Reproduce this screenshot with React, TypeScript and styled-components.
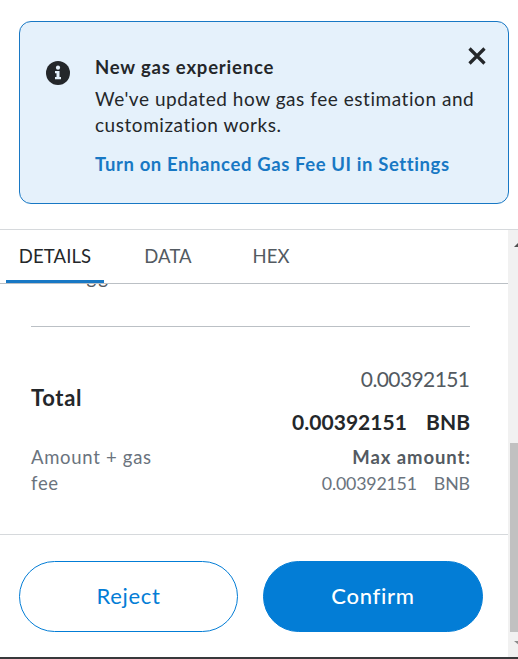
import React from "react";
import styled, { createGlobalStyle } from "styled-components";

const GlobalStyle = createGlobalStyle`
  * { box-sizing: border-box; }
  body { margin: 0; background: #fff; font-family: Lato, "Liberation Sans", sans-serif; font-variant-ligatures: none; }
  button { font: inherit; padding: 0; border: 0; background: none; cursor: pointer; }
`;

const Page = styled.main`
  width: 518px;
  height: 659px;
  display: flex;
  flex-direction: column;
  overflow: hidden;
  background: #fff;
  border-bottom: 2px solid #38393b;
`;

const NoticeArea = styled.div`
  flex: none;
  height: 229px;
  padding: 21px 9px 0 19px;
`;

const Notice = styled.section`
  height: 183px;
  border: 1px solid #1878c4;
  border-radius: 12px;
  background: #e5f1fb;
  display: flex;
  padding: 32px 21px 0 25.5px;
`;

const InfoIcon = styled.svg`
  flex: none;
  width: 24px;
  height: 24px;
  margin: 7px 25.5px 0 0;
`;

const NoticeBody = styled.div`
  flex: 1;
  white-space: nowrap;
`;

const CloseButton = styled.button`
  flex: none;
  width: 20px;
  height: 20px;
  margin-top: -8px;
  margin-left: -20px;
  display: flex;
`;

const Line = styled.p<{ $size?: number; $height?: number; $bold?: boolean; $track?: number; $tone?: string }>`
  margin: 0;
  font-size: ${(p) => p.$size ?? 18}px;
  line-height: ${(p) => p.$height ?? 26}px;
  font-weight: ${(p) => (p.$bold ? 700 : 400)};
  letter-spacing: ${(p) => p.$track ?? 0}px;
  margin-right: ${(p) => -(p.$track ?? 0)}px;
  color: ${(p) => p.$tone ?? "#24272a"};
  white-space: nowrap;
`;

const NoticeText = styled(Line)`
  margin-top: 6px;
`;

const NoticeLink = styled(Line)`
  margin-top: 13px;
`;

const Lower = styled.div`
  flex: 1;
  min-height: 0;
  display: flex;
  border-top: 1px solid #d6d9dc;
`;

const Content = styled.div`
  width: 508px;
  display: flex;
  flex-direction: column;
`;

const Tabs = styled.nav`
  flex: none;
  height: 54px;
  display: flex;
  gap: 27px;
  padding-left: 6px;
  border-bottom: 1px solid #bbc0c5;
`;

const Tab = styled.button<{ $active?: boolean; $width: number }>`
  && { font-size: 18.5px; }
  width: ${(p) => p.$width}px;
  letter-spacing: 0.1px;
  color: ${(p) => (p.$active ? "#24272a" : "#535a61")};
  border-bottom: 3px solid ${(p) => (p.$active ? "#1878c4" : "transparent")};
  padding-top: 1px;
`;

const Details = styled.div`
  height: 250px;
  padding: 0 38px 0 31px;
  overflow: hidden;
`;

const ScrolledLine = styled.div`
  height: 43px;
  overflow: hidden;
  border-bottom: 1px solid #bbc0c5;
  padding-left: 55.5px;
`;

const ScrolledText = styled(Line)`
  margin-top: -20px;
`;

const Totals = styled.div`
  display: flex;
  justify-content: space-between;
  padding-top: 36px;
`;

const Labels = styled.div`
  padding-top: 22px;
`;

const Amounts = styled.div`
  display: flex;
  flex-direction: column;
  align-items: flex-end;
`;

const Money = styled(Line)<{ $gap: number }>`
  display: flex;
  gap: ${(p) => p.$gap}px;
`;

const FeeLabel = styled(Line)`
  margin-top: 33px;
`;

const Footer = styled.footer`
  height: 123px;
  padding: 26px 25px 0 19px;
  display: flex;
  gap: 25px;
  border-top: 1px solid #d6d9dc;
`;

const Action = styled.button<{ $primary?: boolean }>`
  && {
    width: ${(p) => (p.$primary ? 220 : 219)}px;
    height: 71px;
    border: 1px solid #037dd6;
    border-radius: 36px;
    background: ${(p) => (p.$primary ? "#037dd6" : "#fff")};
    color: ${(p) => (p.$primary ? "#fff" : "#037dd6")};
    font-size: 22px;
    font-weight: ${(p) => (p.$primary ? 500 : 400)};
    letter-spacing: 0.7px;
    padding-bottom: 3px;
  }
`;

const ScrollTrack = styled.div`
  width: 10px;
  display: flex;
  flex-direction: column;
  background: #f1f1f1;
  padding-top: 12px;
`;

const Arrow = styled.svg`
  flex: none;
  width: 10px;
  height: 6px;
`;

const Thumb = styled.div`
  flex: none;
  height: 189px;
  margin: 195px 0 8px 2px;
  background: #c1c1c1;
`;

export default function App() {
  return (
    <Page>
      <GlobalStyle />
      <NoticeArea>
        <Notice>
          <InfoIcon viewBox="0 0 24 24">
            <circle cx="12" cy="12" r="12" fill="#24272a" />
            <circle cx="12" cy="6.7" r="2.1" fill="#e5f1fb" />
            <path d="M9 10h4.5v6H15v2.3H9V16h1.5v-3.8H9z" fill="#e5f1fb" />
          </InfoIcon>
          <NoticeBody>
            <Line $bold $size={18.5} $track={0.8}>New gas experience</Line>
            <NoticeText $size={19} $track={0.55}>We've updated how gas fee estimation and<br />customization works.</NoticeText>
            <NoticeLink $bold $size={18.5} $track={0.6} $tone="#1878c4">Turn on Enhanced Gas Fee UI in Settings</NoticeLink>
          </NoticeBody>
          <CloseButton aria-label="Close">
            <svg width="20" height="20" viewBox="0 0 20 20">
              <path d="M2.5 2.5l15 15M17.5 2.5l-15 15" stroke="#24272a" strokeWidth="3.2" />
            </svg>
          </CloseButton>
        </Notice>
      </NoticeArea>
      <Lower>
        <Content>
          <Tabs>
            <Tab $active $width={98}>DETAILS</Tab>
            <Tab $width={74}>DATA</Tab>
            <Tab $width={78}>HEX</Tab>
          </Tabs>
          <Details>
            <ScrolledLine>
              <ScrolledText $size={19} $track={2} $tone="#535a61">gg</ScrolledText>
            </ScrolledLine>
            <Totals>
              <Labels>
                <Line $bold $size={22} $track={0.7}>Total</Line>
                <FeeLabel $tone="#6a737d" $size={18.5} $track={0.7}>Amount + gas<br />fee</FeeLabel>
              </Labels>
              <Amounts>
                <Line $size={21} $height={32} $track={-0.6} $tone="#535a61">0.00392151</Line>
                <Money $bold $size={21} $height={54} $gap={19} $track={0.05}><span>0.00392151</span><span>BNB</span></Money>
                <Line $bold $tone="#535a61" $height={17} $size={18.5} $track={0.9}>Max amount:</Line>
                <Money $tone="#6a737d" $height={34} $gap={17} $track={-0.2} $size={17.8}><span>0.00392151</span><span>BNB</span></Money>
              </Amounts>
            </Totals>
          </Details>
          <Footer>
            <Action>Reject</Action>
            <Action $primary>Confirm</Action>
          </Footer>
        </Content>
        <ScrollTrack>
          <Arrow viewBox="0 0 10 6"><path d="M6 5l5-5v5z" fill="#505050" /></Arrow>
          <Thumb />
          <Arrow viewBox="0 0 10 6"><path d="M6 1h5v4z" fill="#8b8b8b" /></Arrow>
        </ScrollTrack>
      </Lower>
    </Page>
  );
}
